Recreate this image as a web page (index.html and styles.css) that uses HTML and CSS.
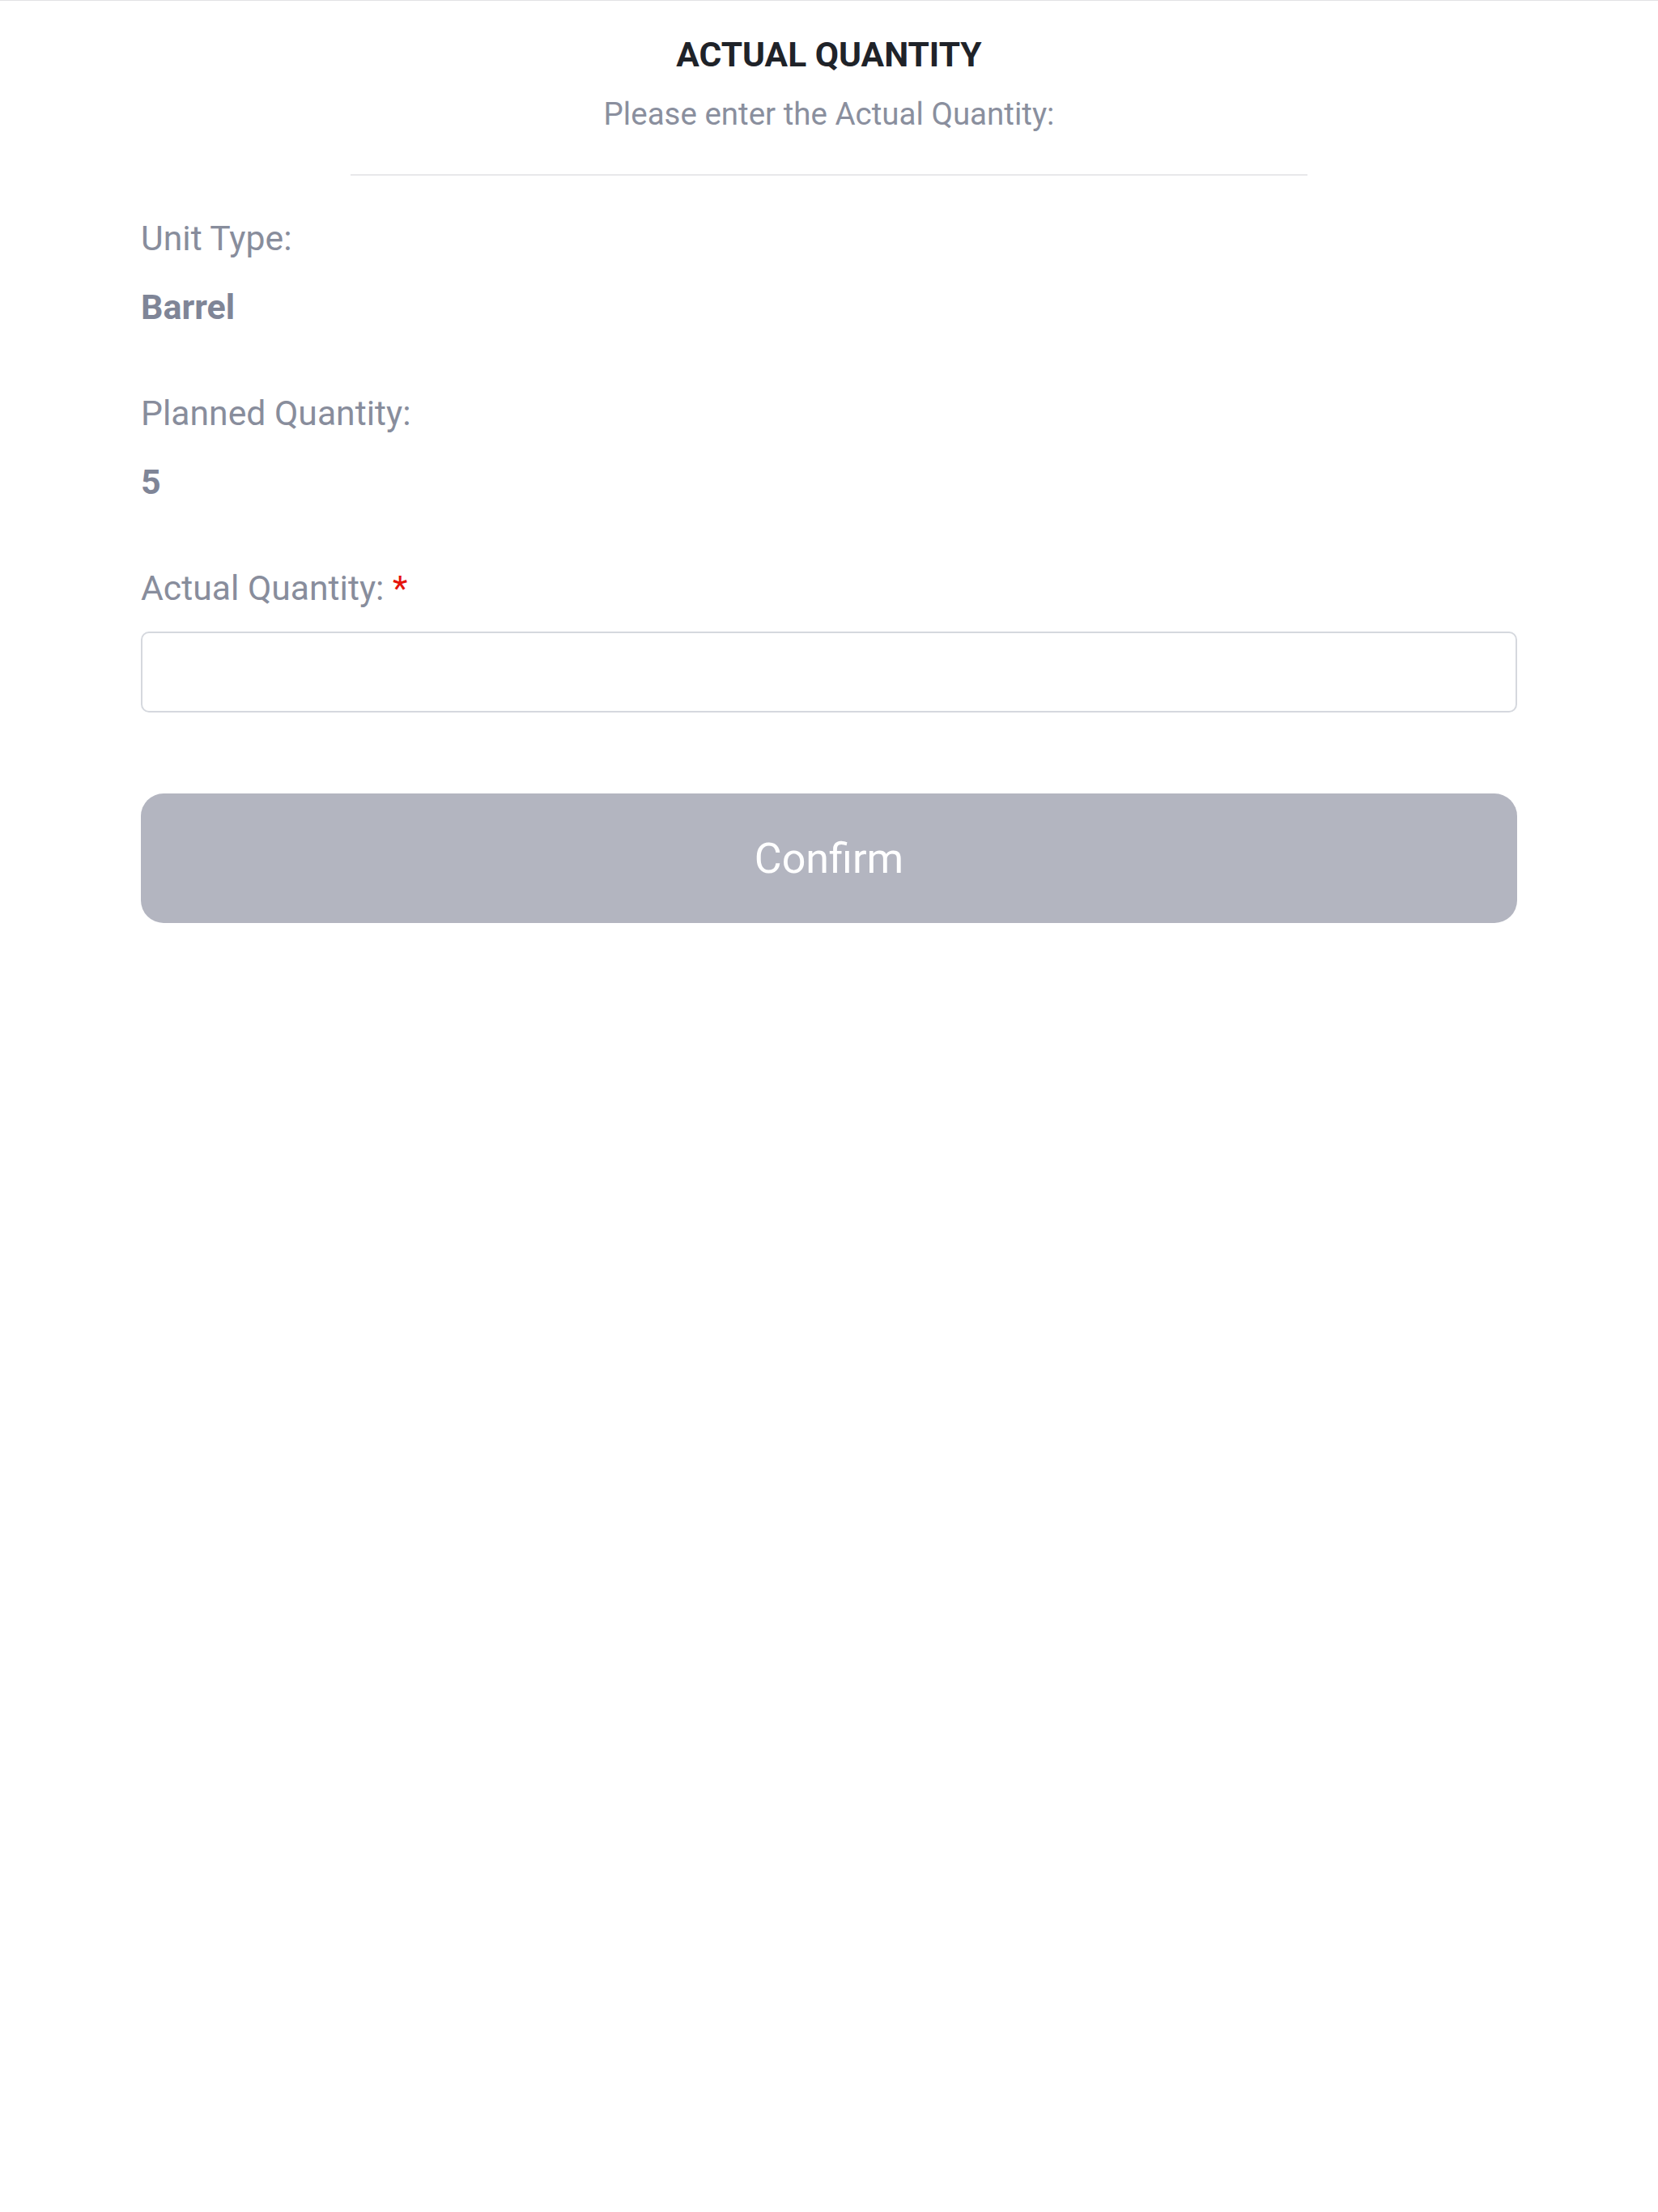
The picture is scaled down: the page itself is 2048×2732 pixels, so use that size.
FILE: index.html
```html
<!DOCTYPE html>
<html lang="en">
<head>
<meta charset="utf-8">
<title>Actual Quantity</title>
<link rel="stylesheet" href="styles.css">
</head>
<body>
<div class="sheet">
  <header class="head">
    <h1 class="title">ACTUAL QUANTITY</h1>
    <p class="subtitle">Please enter the Actual Quantity:</p>
  </header>
  <div class="divider"></div>
  <form class="form">
    <div class="field">
      <div class="label">Unit Type:</div>
      <div class="value">Barrel</div>
    </div>
    <div class="field">
      <div class="label">Planned Quantity:</div>
      <div class="value">5</div>
    </div>
    <div class="field field-input">
      <label class="label" for="actual">Actual Quantity: <span class="req">*</span></label>
      <input class="input" id="actual" type="text">
    </div>
    <button class="confirm" type="button">Confirm</button>
  </form>
</div>
</body>
</html>
```

FILE: styles.css
```css
* { box-sizing: border-box; }
html, body { margin: 0; padding: 0; background: #ffffff; }
body { font-family: Roboto, "Liberation Sans", Arial, sans-serif; }

.sheet {
  border-top: 1px solid #e2e2e4;
  padding: 0 174px;
  min-height: 2731px;
}

.head {
  display: flex;
  flex-direction: column;
  align-items: center;
  padding-top: 42px;
}
.title {
  margin: 0;
  font-size: 42.5px;
  line-height: 50px;
  font-weight: 700;
  color: #1f2329;
}
.subtitle {
  margin: 25px 0 0;
  font-size: 38.5px;
  line-height: 46px;
  font-weight: 400;
  color: #8a8f9e;
}
.divider {
  width: 1182px;
  height: 2px;
  margin: 51px auto 0;
  background: #e8e8ea;
}

.form {
  display: flex;
  flex-direction: column;
  gap: 79px;
  padding-top: 51px;
}
.field {
  display: flex;
  flex-direction: column;
  gap: 33px;
}
.field-input { gap: 28px; }
.label {
  font-size: 42.7px;
  line-height: 52px;
  color: #888d9c;
}
.value {
  font-size: 43px;
  line-height: 52px;
  font-weight: 700;
  color: #7f8597;
}
.req { color: #e5140d; }
.input {
  display: block;
  width: 100%;
  height: 100px;
  margin: 0;
  border: 2px solid #d5d8de;
  border-radius: 10px;
  background: #ffffff;
  font: inherit;
  font-size: 43px;
  padding: 0 24px;
  outline: none;
}
.confirm {
  display: block;
  width: 100%;
  height: 160px;
  margin-top: 21px;
  border: none;
  border-radius: 28px;
  background: #b3b5c0;
  color: #ffffff;
  font-family: Roboto, "Liberation Sans", Arial, sans-serif;
  font-size: 52px;
  font-weight: 400;
  padding: 0;
}
```
